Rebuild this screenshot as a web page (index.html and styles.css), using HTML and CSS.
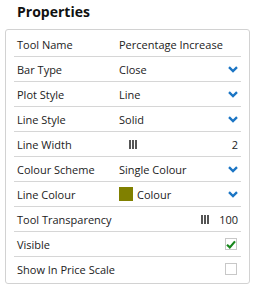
FILE: index.html
```html
<!DOCTYPE html>
<html>
	<head>
		<meta charset="utf-8" />
		<title>Properties</title>
		<link rel="stylesheet" href="styles.css">
	</head>
	<body>
		<h1 class="title">Properties</h1>
		<div class="panel">
			<div class="row">
				<span class="label">Tool Name</span>
				<span class="value">Percentage Increase</span>
			</div>
			<div class="row">
				<span class="label">Bar Type</span>
				<span class="value">Close</span>
				<svg class="chevron" width="10" height="7" viewBox="0 0 10 7"><path d="M1 1.2 L5 5 L9 1.2" /></svg>
			</div>
			<div class="row">
				<span class="label">Plot Style</span>
				<span class="value">Line</span>
				<svg class="chevron" width="10" height="7" viewBox="0 0 10 7"><path d="M1 1.2 L5 5 L9 1.2" /></svg>
			</div>
			<div class="row">
				<span class="label">Line Style</span>
				<span class="value">Solid</span>
				<svg class="chevron" width="10" height="7" viewBox="0 0 10 7"><path d="M1 1.2 L5 5 L9 1.2" /></svg>
			</div>
			<div class="row">
				<span class="label">Line Width</span>
				<span class="value slider">
					<span class="handle"><i></i><i></i><i></i></span>
				</span>
				<span class="num">2</span>
			</div>
			<div class="row">
				<span class="label">Colour Scheme</span>
				<span class="value">Single Colour</span>
				<svg class="chevron" width="10" height="7" viewBox="0 0 10 7"><path d="M1 1.2 L5 5 L9 1.2" /></svg>
			</div>
			<div class="row">
				<span class="label">Line Colour</span>
				<span class="value"><span class="swatch"></span>Colour</span>
				<svg class="chevron" width="10" height="7" viewBox="0 0 10 7"><path d="M1 1.2 L5 5 L9 1.2" /></svg>
			</div>
			<div class="row">
				<span class="label wide">Tool Transparency</span>
				<span class="handle"><i></i><i></i><i></i></span>
				<span class="num">100</span>
			</div>
			<div class="row">
				<span class="label wide">Visible</span>
				<span class="check">
					<svg width="10" height="9" viewBox="0 0 10 9"><path d="M1 4.8 L3.8 7.4 L9 1.4" /></svg>
				</span>
			</div>
			<div class="row">
				<span class="label wide">Show In Price Scale</span>
				<span class="check"></span>
			</div>
		</div>
	</body>
</html>
```

FILE: styles.css
```css
body {
	margin:0;
	font-family:"Open Sans", "Liberation Sans", sans-serif;
	font-size:11px;
	color:#222;
	background:#fff;
}
.title {
	margin:0;
	padding:2px 0 0 17px;
	height:27px;
	font-size:14px;
	font-weight:bold;
	line-height:20px;
	color:#111;
}
.panel {
	margin-left:5px;
	width:227px;
	height:251px;
	padding:2px 8px 0 8px;
	border:solid 1px #d2d2d2;
	border-radius:3px;
}
.row {
	display:flex;
	align-items:center;
	height:24px;
	padding:0 3px;
	border-bottom:solid 1px #d6d6d6;
}
.row:last-child {
	border-bottom:0;
}
.label {
	width:102px;
	flex:none;
}
.label.wide {
	flex:1;
	width:auto;
}
.value {
	flex:1;
	display:flex;
	align-items:center;
}
.slider {
	padding-left:10px;
}
.num {
	margin-left:auto;
}
.handle {
	display:inline-flex;
	gap:1px;
	height:9px;
	margin-right:10px;
}
.slider .handle {
	margin-right:0;
}
.handle i {
	display:block;
	width:2px;
	height:9px;
	background:#555;
}
.chevron {
	flex:none;
	fill:none;
	stroke:#1b75c4;
	stroke-width:2.4;
}
.swatch {
	display:inline-block;
	width:14px;
	height:14px;
	margin-right:4px;
	background:#808000;
}
.check {
	display:flex;
	align-items:center;
	justify-content:center;
	width:10px;
	height:10px;
	border:solid 1px #c8c8c8;
	margin-right:1px;
}
.check svg {
	fill:none;
	stroke:#18871c;
	stroke-width:2.2;
}
```
